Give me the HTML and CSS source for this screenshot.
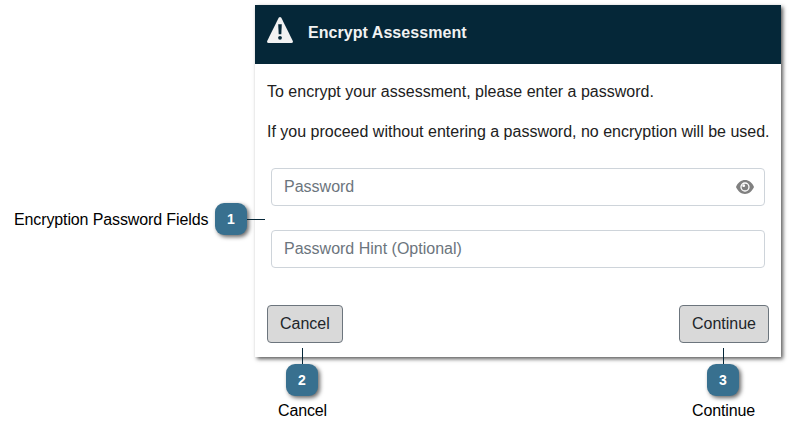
FILE: index.html
```html
<!DOCTYPE html>
<html lang="en">
<head>
<meta charset="utf-8">
<title>Encrypt Assessment</title>
<link rel="stylesheet" href="styles.css">
</head>
<body>
<main class="figure">
  <section class="dialog">
    <header class="dialog-header">
      <svg class="warning" viewBox="0 0 26 26" width="26" height="26" aria-hidden="true">
        <path fill="#f2f2f2" d="M11.7.8Q13-.7 14.3.8L25.7 23.7Q26.5 26 24.4 26H1.6Q-.5 26 .3 23.7Z"/>
        <path fill="#052738" d="M11.2 7.2h3.6l-.5 10h-2.6z"/>
        <circle fill="#052738" cx="13" cy="20.8" r="1.9"/>
      </svg>
      <h1 class="title">Encrypt Assessment</h1>
    </header>
    <div class="dialog-body">
      <p class="message">To encrypt your assessment, please enter a password.</p>
      <p class="message">If you proceed without entering a password, no encryption will be used.</p>
      <div class="fields">
        <div class="field">
          <span>Password</span>
          <svg class="eye" viewBox="0 0 18 14" width="18" height="14" aria-hidden="true">
            <path fill="#808080" d="M.2 6.4C2 2.6 5.200 0 9 0s7 2.600 8.800 6.400q.3.600 0 1.200C16 11.400 12.800 14 9 14S2 11.400.2 7.600q-.3-.6 0-1.200z"/>
            <circle cx="9" cy="7" r="4" fill="#808080" stroke="#fff" stroke-width="1.300"/>
            <circle cx="7.700" cy="5.700" r="1.400" fill="#fff"/>
          </svg>
        </div>
        <div class="field"><span>Password Hint (Optional)</span></div>
      </div>
      <div class="actions">
        <button class="button">Cancel</button>
        <button class="button">Continue</button>
      </div>
    </div>
  </section>
  <div class="callout callout-side">
    <span class="label">Encryption Password Fields</span>
    <span class="badge">1</span>
    <span class="line-h"></span>
  </div>
  <div class="callout callout-below callout-cancel">
    <span class="line-v"></span>
    <span class="badge">2</span>
    <span class="label">Cancel</span>
  </div>
  <div class="callout callout-below callout-continue">
    <span class="line-v"></span>
    <span class="badge">3</span>
    <span class="label">Continue</span>
  </div>
</main>
</body>
</html>
```
FILE: styles.css
```css
* { box-sizing: border-box; }

body {
  margin: 0;
  background: #fff;
  color: #000;
  font: 16px/20px "Liberation Sans", Arial, sans-serif;
}

.figure {
  position: relative;
  width: 790px;
  height: 435px;
  padding: 5px 0 0 255px;
  overflow: hidden;
}

.dialog {
  width: 526px;
  height: 352px;
  background: #fff;
  box-shadow: 2px 2px 4px rgba(0, 0, 0, .65);
}

.dialog-header {
  display: flex;
  height: 59px;
  padding: 12px 12px 0;
  gap: 15px;
  background: #052738;
}

.title {
  margin: 6px 0 0;
  color: #f2f2f2;
  font-size: 16px;
  line-height: 20px;
  letter-spacing: .05px;
}

.dialog-body { padding: 18px 12px 0; }

.message {
  margin: 0 0 20px;
  color: #212121;
  white-space: nowrap;
}

.fields {
  display: flex;
  flex-direction: column;
  gap: 24px;
  margin: 26px 4px 37px;
}

.field {
  display: flex;
  align-items: center;
  justify-content: space-between;
  height: 38px;
  padding: 0 10px 1px 12px;
  border: 1px solid #ced4da;
  border-radius: 4px;
  color: #6c757d;
}

.actions {
  display: flex;
  justify-content: space-between;
}

.button {
  height: 38px;
  padding: 0 12px;
  border: 1px solid #6c757d;
  border-radius: 4px;
  background: #d9d9d9;
  color: #212529;
  font: inherit;
}

.callout {
  position: absolute;
  display: flex;
  align-items: center;
}

.callout-side {
  top: 203px;
  left: 14px;
}

.callout-side .label {
  width: 194px;
  padding-top: 2px;
  letter-spacing: -.12px;
}

.callout-side .badge { margin-left: 7px; }

.callout-below {
  top: 348px;
  width: 80px;
  flex-direction: column;
}

.callout-cancel { left: 262px; }
.callout-continue { left: 683px; }

.callout-below .label {
  margin-top: 5px;
  padding-left: 1px;
  letter-spacing: -.15px;
}

.label { white-space: nowrap; }

.badge {
  width: 32px;
  height: 32px;
  border-radius: 9px;
  background: #38708f;
  box-shadow: 2px 2px 4px rgba(0, 0, 0, .6);
  color: #fff;
  font-size: 14px;
  font-weight: bold;
  line-height: 32px;
  text-align: center;
}

.line-h {
  width: 18px;
  height: 1px;
  background: #052738;
}

.line-v {
  width: 1px;
  height: 16px;
  background: #052738;
}
```
